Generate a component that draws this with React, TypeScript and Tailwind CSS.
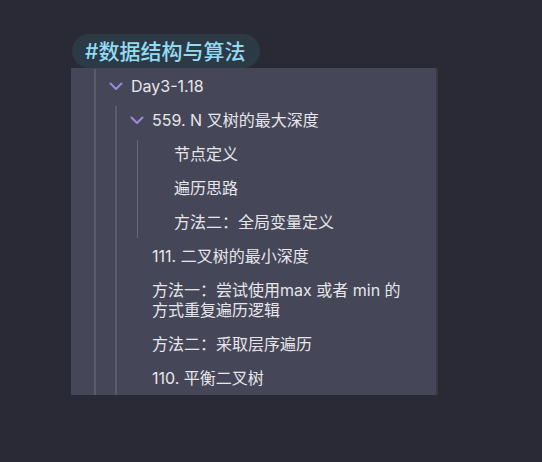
import React from "react";

const FONT = { fontFamily: 'Inter, "Noto Sans CJK SC", sans-serif' };

function Chevron() {
  return (
    <span className="flex h-5 w-4 shrink-0 items-center justify-center">
      <svg width="16" height="16" viewBox="0 0 16 16" fill="none">
        <path
          d="M2.5 5.5 L8 11 L13.5 5.5"
          stroke="#a086e0"
          strokeWidth="2"
          strokeLinecap="round"
          strokeLinejoin="round"
        />
      </svg>
    </span>
  );
}

function Row({ text, chevron }: { text: string; chevron?: boolean }) {
  return (
    <div className="flex items-start py-[7px] leading-[20px]">
      {chevron ? <Chevron /> : <span className="h-5 w-4 shrink-0" />}
      <span className="ml-[7px] max-w-[258px] text-[16px] text-[#e6e6ea]">{text}</span>
    </div>
  );
}

export default function App() {
  return (
    <div className="h-[462px] w-[542px] overflow-hidden bg-[#292a36]" style={FONT}>
      <div className="pl-[72px] pt-[34px]">
        <div className="inline-flex h-[34px] items-center rounded-full bg-[#2c3a46] pl-[13px] pr-[15px] text-[21px] font-medium leading-none text-[#92dbf3]">
          #数据结构与算法
        </div>
      </div>
      <div className="ml-[71px] h-[327px] w-[367px] overflow-hidden border-r-2 border-[#37373d] bg-[#464659] pt-px">
        <div className="relative ml-[23px] pl-[14px]">
          <span className="absolute bottom-0 left-0 top-0 w-[2px] bg-[#5b5b70]" />
          <Row text="Day3-1.18" chevron />
          <div className="relative ml-[7px] pl-[14px]">
            <span className="absolute bottom-0 left-0 top-[3px] w-[2px] bg-[#5b5b70]" />
            <Row text="559. N 叉树的最大深度" chevron />
            <div className="relative ml-[8px] pl-[14px]">
              <span className="absolute bottom-[1px] left-0 top-[3px] w-px bg-[#68687e]" />
              <Row text="节点定义" />
              <Row text="遍历思路" />
              <Row text="方法二：全局变量定义" />
            </div>
            <Row text="111. 二叉树的最小深度" />
            <Row text="方法一：尝试使用max 或者 min 的方式重复遍历逻辑" />
            <Row text="方法二：采取层序遍历" />
            <Row text="110. 平衡二叉树" />
          </div>
        </div>
      </div>
    </div>
  );
}
